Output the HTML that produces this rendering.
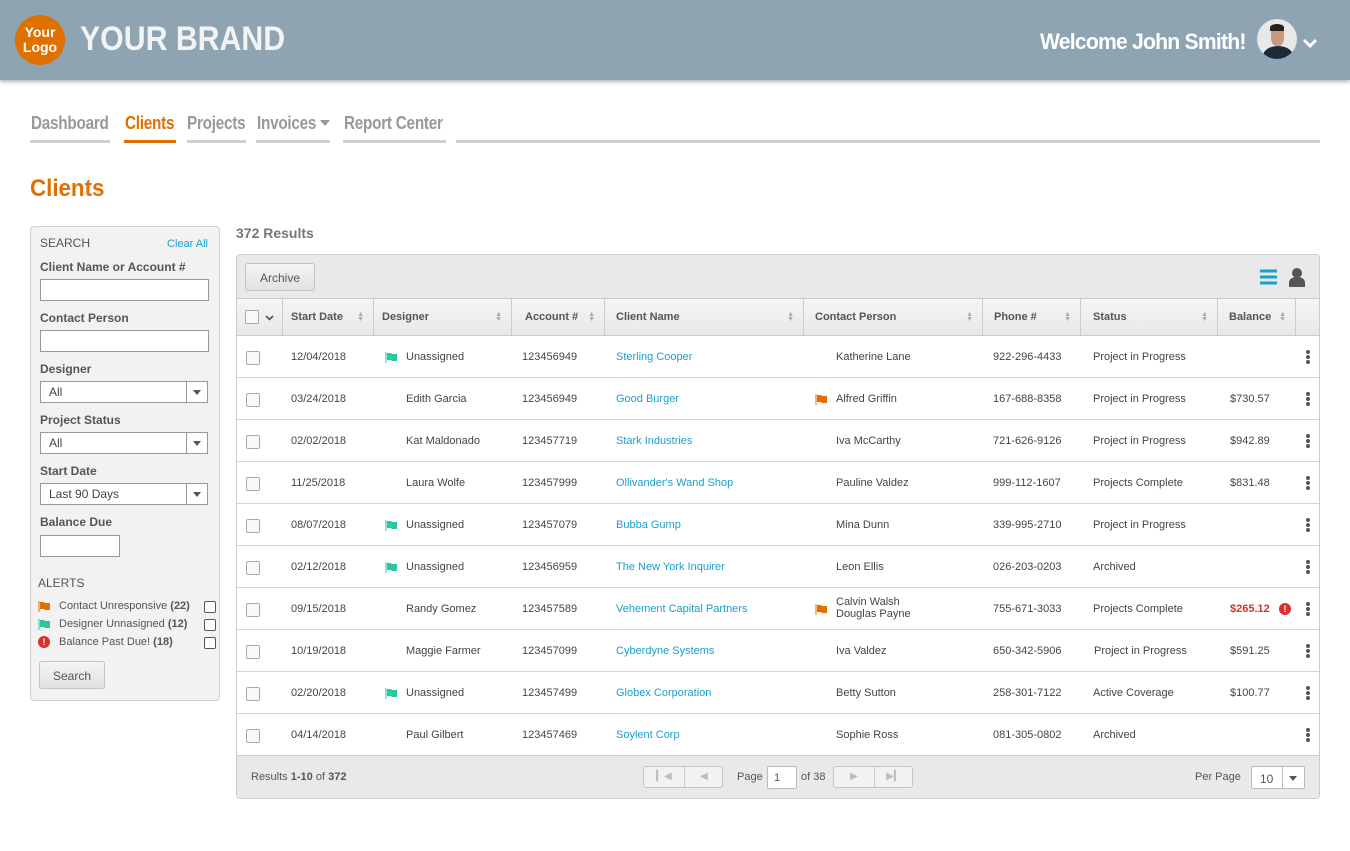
<!DOCTYPE html>
<html><head><meta charset="utf-8"><style>
*{box-sizing:border-box;margin:0;padding:0}
body{width:1350px;height:851px;background:#fff;font-family:"Liberation Sans",sans-serif;position:relative;overflow:hidden;color:#444}
.a{position:absolute}
.hdr{left:0;top:0;width:1350px;height:80px;background:#8fa4b2;box-shadow:0 2px 4px rgba(0,0,0,.3)}
.logo{left:15px;top:15px;width:50px;height:50px;border-radius:50%;background:#e07000;color:#fff;font-weight:bold;font-size:14px;line-height:15px;text-align:center;padding-top:10px}
.nav{top:113px;font-size:18px;color:#999;font-weight:bold;letter-spacing:-0.3px;transform:scaleX(0.85);transform-origin:0 0;white-space:nowrap}
.ul{top:140px;height:3px;background:#d0d0d0}
.side{left:30px;top:226px;width:190px;height:475px;background:#f2f2f2;border:1px solid #d0d0d0;border-radius:4px}
.lbl{font-size:12px;font-weight:bold;color:#555;left:9px}
.inp{left:9px;width:169px;height:22px;background:#fff;border:1px solid #999}
.sel{left:9px;width:168px;height:22px;background:#fff;border:1px solid #999;font-size:12px;padding:3px 0 0 8px;color:#444}
.sel:after{content:"";position:absolute;right:0;top:0;width:20px;height:20px;border-left:1px solid #999}
.sel i{position:absolute;right:6px;top:8px;border:4px solid transparent;border-top:5px solid #555}
.panel{left:236px;top:254px;width:1084px;height:545px;border:1px solid #ccc;border-radius:4px;background:#fff;overflow:hidden}
.tb{left:0;top:0;width:1084px;height:44px;background:#e9e9e9;border-bottom:1px solid #ccc}
.btn{background:linear-gradient(#f4f4f4,#e2e2e2);border:1px solid #c4c4c4;border-radius:3px;font-size:12px;color:#555;text-align:center}
.th{top:44px;height:37px;width:1084px;background:linear-gradient(#f5f5f5,#e8e8e8);border-bottom:1px solid #ccc}
.th div{position:absolute;top:0;height:36px;border-right:1px solid #ccc;font-size:11px;font-weight:bold;color:#555;padding:12px 0 0 8px}
.th s{position:absolute;right:9px;top:13px;font-size:7px;line-height:5px;color:#aaa;text-decoration:none}
.row{left:0;width:1084px;height:42px;border-bottom:1px solid #d5d5d5;font-size:11px;color:#444}
.row span{position:absolute;top:15px;white-space:nowrap}
.cb{position:absolute;left:9px;top:15px;width:14px;height:14px;border:1px solid #aaa;border-radius:2px;background:#f8f8f8}
.lk{color:#1a9fc9}
.dots{position:absolute;left:1069px;top:14px;width:4px}
.dots b{display:block;width:4px;height:4px;border-radius:50%;background:#555;margin-bottom:1px}
.flag{position:absolute;top:16px;width:14px;height:11px}
.ft{left:0;top:500px;width:1084px;height:45px;background:#e9e9e9;border-top:1px solid #ccc;font-size:11px;color:#555}
.sm{display:inline-block;width:12px;height:12px;border:1px solid #555;border-radius:2px;background:#fff}
</style></head><body>
<div class="a hdr"></div>
<div class="a logo">Your<br>Logo</div>
<div class="a" style="left:80px;top:20px;font-size:34px;font-weight:bold;color:#f3f3f3;transform:scaleX(0.89);transform-origin:0 0;white-space:nowrap">YOUR BRAND</div>
<div class="a" style="left:1040px;top:29px;font-size:22px;font-weight:bold;color:#fff;letter-spacing:-0.8px;transform:scaleX(0.96);transform-origin:0 0;white-space:nowrap">Welcome John Smith!</div>
<div class="a" style="left:1257px;top:19px;width:40px;height:40px;border-radius:50%;background:#e8e8e8;overflow:hidden"><div class="a" style="left:6px;top:27px;width:30px;height:20px;border-radius:50% 50% 0 0;background:#1d2a38"></div><div class="a" style="left:14px;top:7px;width:13px;height:20px;border-radius:40%;background:#c99880"></div><div class="a" style="left:13px;top:5px;width:14px;height:7px;border-radius:50% 50% 0 0;background:#2a1f1a"></div></div>
<svg class="a" style="left:1302px;top:38px" width="16" height="12"><path d="M2 2l6 6 6-6" stroke="#fff" stroke-width="3" fill="none"/></svg>

<div class="a nav" style="left:31px">Dashboard</div><div class="a ul" style="left:30px;width:80px"></div>
<div class="a nav" style="left:125px;color:#e07000">Clients</div><div class="a ul" style="left:124px;width:52px;background:#e07000"></div>
<div class="a nav" style="left:187px">Projects</div><div class="a ul" style="left:187px;width:59px"></div>
<div class="a nav" style="left:257px">Invoices</div><div class="a" style="left:320px;top:120px;border:5px solid transparent;border-top:6px solid #999"></div><div class="a ul" style="left:256px;width:74px"></div>
<div class="a nav" style="left:344px">Report Center</div><div class="a ul" style="left:343px;width:103px"></div>
<div class="a ul" style="left:456px;width:864px"></div>

<div class="a" style="left:30px;top:175px;font-size:24px;font-weight:bold;color:#e07000;transform:scaleX(0.93);transform-origin:0 0">Clients</div>

<div class="a side">
<div class="a" style="left:9px;top:9px;font-size:12px;color:#555">SEARCH</div>
<div class="a" style="left:136px;top:11px;font-size:11px;color:#1a9fc9">Clear All</div>
<div class="a lbl" style="top:33px">Client Name or Account #</div>
<div class="a inp" style="top:52px"></div>
<div class="a lbl" style="top:84px">Contact Person</div>
<div class="a inp" style="top:103px"></div>
<div class="a lbl" style="top:135px">Designer</div>
<div class="a sel" style="top:154px">All<i></i></div>
<div class="a lbl" style="top:186px">Project Status</div>
<div class="a sel" style="top:205px">All<i></i></div>
<div class="a lbl" style="top:237px">Start Date</div>
<div class="a sel" style="top:256px">Last 90 Days<i></i></div>
<div class="a lbl" style="top:288px">Balance Due</div>
<div class="a inp" style="top:308px;width:80px"></div>
<div class="a" style="left:7px;top:349px;font-size:12px;color:#555">ALERTS</div>
<svg class="a" style="left:7px;top:374px" width="14" height="11"><path d="M1 0v11" stroke="#e07000"/><path d="M2 1h4l1 1h5v7h-5l-1-1h-4z" fill="#e07000"/></svg>
<div class="a" style="left:28px;top:373px;font-size:11px;color:#555">Contact Unresponsive <b>(22)</b></div><div class="a sm" style="left:173px;top:374px"></div>
<svg class="a" style="left:7px;top:392px" width="14" height="11"><path d="M1 0v11" stroke="#2dc6a0"/><path d="M2 1h4l1 1h5v7h-5l-1-1h-4z" fill="#2dc6a0"/></svg>
<div class="a" style="left:28px;top:391px;font-size:11px;color:#555">Designer Unnasigned <b>(12)</b></div><div class="a sm" style="left:173px;top:392px"></div>
<div class="a" style="left:7px;top:409px;width:12px;height:12px;border-radius:50%;background:#d9302c;color:#fff;font-size:9px;font-weight:bold;text-align:center;line-height:12px">!</div>
<div class="a" style="left:28px;top:409px;font-size:11px;color:#555">Balance Past Due! <b>(18)</b></div><div class="a sm" style="left:173px;top:410px"></div>
<div class="a btn" style="left:8px;top:434px;width:66px;height:28px;padding-top:7px">Search</div>
</div>

<div class="a" style="left:236px;top:225px;font-size:14px;font-weight:bold;color:#777">372 Results</div>

<div class="a panel">
<div class="a tb"></div>
<div class="a btn" style="left:8px;top:8px;width:70px;height:28px;padding-top:7px">Archive</div>
<svg class="a" style="left:1022px;top:13px" width="20" height="18"><path d="M1 3h17M1 9h17M1 15h17" stroke="#1a9fc9" stroke-width="3"/></svg>
<svg class="a" style="left:1051px;top:12px" width="18" height="20"><circle cx="9" cy="6" r="5" fill="#555"/><path d="M1 20v-4c0-4 3-6 8-6s8 2 8 6v4z" fill="#555"/></svg>
<div class="a th">
<div style="left:0;width:46px"><span class="cb" style="top:11px;left:8px"></span><svg style="position:absolute;left:28px;top:16px" width="9" height="6"><path d="M1 1l3.5 3.5L8 1" stroke="#555" stroke-width="1.6" fill="none"/></svg></div>
<div style="left:46px;width:91px">Start Date<s>▲<br>▼</s></div>
<div style="left:137px;width:138px">Designer<s>▲<br>▼</s></div>
<div style="left:275px;width:93px;padding-left:13px">Account #<s>▲<br>▼</s></div>
<div style="left:368px;width:199px;padding-left:11px">Client Name<s>▲<br>▼</s></div>
<div style="left:567px;width:179px;padding-left:11px">Contact Person<s>▲<br>▼</s></div>
<div style="left:746px;width:98px;padding-left:11px">Phone #<s>▲<br>▼</s></div>
<div style="left:844px;width:137px;padding-left:12px">Status<s>▲<br>▼</s></div>
<div style="left:981px;width:78px;padding-left:11px">Balance<s>▲<br>▼</s></div>
<div style="left:1059px;width:25px;border-right:none"></div>
</div>

<div class="a row" style="top:81px"><i class="cb"></i><span style="left:54px">12/04/2018</span><svg class="flag" style="left:148px"><path d="M1 0v11" stroke="#2dc6a0"/><path d="M2 1h4l1 1h5v7h-5l-1-1h-4z" fill="#2dc6a0"/></svg><span style="left:169px">Unassigned</span><span style="left:285px">123456949</span><span class="lk" style="left:379px">Sterling Cooper</span><span style="left:599px">Katherine Lane</span><span style="left:756px">922-296-4433</span><span style="left:856px">Project in Progress</span><i class="dots"><b></b><b></b><b></b></i></div>
<div class="a row" style="top:123px"><i class="cb"></i><span style="left:54px">03/24/2018</span><span style="left:169px">Edith Garcia</span><span style="left:285px">123456949</span><span class="lk" style="left:379px">Good Burger</span><svg class="flag" style="left:578px"><path d="M1 0v11" stroke="#e07000"/><path d="M2 1h4l1 1h5v7h-5l-1-1h-4z" fill="#e07000"/></svg><span style="left:599px">Alfred Griffin</span><span style="left:756px">167-688-8358</span><span style="left:856px">Project in Progress</span><span style="left:993px">$730.57</span><i class="dots"><b></b><b></b><b></b></i></div>
<div class="a row" style="top:165px"><i class="cb"></i><span style="left:54px">02/02/2018</span><span style="left:169px">Kat Maldonado</span><span style="left:285px">123457719</span><span class="lk" style="left:379px">Stark Industries</span><span style="left:599px">Iva McCarthy</span><span style="left:756px">721-626-9126</span><span style="left:856px">Project in Progress</span><span style="left:993px">$942.89</span><i class="dots"><b></b><b></b><b></b></i></div>
<div class="a row" style="top:207px"><i class="cb"></i><span style="left:54px">11/25/2018</span><span style="left:169px">Laura Wolfe</span><span style="left:285px">123457999</span><span class="lk" style="left:379px">Ollivander's Wand Shop</span><span style="left:599px">Pauline Valdez</span><span style="left:756px">999-112-1607</span><span style="left:856px">Projects Complete</span><span style="left:993px">$831.48</span><i class="dots"><b></b><b></b><b></b></i></div>
<div class="a row" style="top:249px"><i class="cb"></i><span style="left:54px">08/07/2018</span><svg class="flag" style="left:148px"><path d="M1 0v11" stroke="#2dc6a0"/><path d="M2 1h4l1 1h5v7h-5l-1-1h-4z" fill="#2dc6a0"/></svg><span style="left:169px">Unassigned</span><span style="left:285px">123457079</span><span class="lk" style="left:379px">Bubba Gump</span><span style="left:599px">Mina Dunn</span><span style="left:756px">339-995-2710</span><span style="left:856px">Project in Progress</span><i class="dots"><b></b><b></b><b></b></i></div>
<div class="a row" style="top:291px"><i class="cb"></i><span style="left:54px">02/12/2018</span><svg class="flag" style="left:148px"><path d="M1 0v11" stroke="#2dc6a0"/><path d="M2 1h4l1 1h5v7h-5l-1-1h-4z" fill="#2dc6a0"/></svg><span style="left:169px">Unassigned</span><span style="left:285px">123456959</span><span class="lk" style="left:379px">The New York Inquirer</span><span style="left:599px">Leon Ellis</span><span style="left:756px">026-203-0203</span><span style="left:856px">Archived</span><i class="dots"><b></b><b></b><b></b></i></div>
<div class="a row" style="top:333px"><i class="cb"></i><span style="left:54px">09/15/2018</span><span style="left:169px">Randy Gomez</span><span style="left:285px">123457589</span><span class="lk" style="left:379px">Vehement Capital Partners</span><svg class="flag" style="left:578px"><path d="M1 0v11" stroke="#e07000"/><path d="M2 1h4l1 1h5v7h-5l-1-1h-4z" fill="#e07000"/></svg><span style="left:599px;top:8px;line-height:12px">Calvin Walsh<br>Douglas Payne</span><span style="left:756px">755-671-3033</span><span style="left:856px">Projects Complete</span><span style="left:993px;color:#d9302c;font-weight:bold">$265.12</span><i class="a" style="left:1042px;top:15px;width:12px;height:12px;border-radius:50%;background:#d9302c;color:#fff;font-size:9px;font-weight:bold;text-align:center;line-height:12px;font-style:normal">!</i><i class="dots"><b></b><b></b><b></b></i></div>
<div class="a row" style="top:375px"><i class="cb"></i><span style="left:54px">10/19/2018</span><span style="left:169px">Maggie Farmer</span><span style="left:285px">123457099</span><span class="lk" style="left:379px">Cyberdyne Systems</span><span style="left:599px">Iva Valdez</span><span style="left:756px">650-342-5906</span><span style="left:857px">Project in Progress</span><span style="left:993px">$591.25</span><i class="dots"><b></b><b></b><b></b></i></div>
<div class="a row" style="top:417px"><i class="cb"></i><span style="left:54px">02/20/2018</span><svg class="flag" style="left:148px"><path d="M1 0v11" stroke="#2dc6a0"/><path d="M2 1h4l1 1h5v7h-5l-1-1h-4z" fill="#2dc6a0"/></svg><span style="left:169px">Unassigned</span><span style="left:285px">123457499</span><span class="lk" style="left:379px">Globex Corporation</span><span style="left:599px">Betty Sutton</span><span style="left:756px">258-301-7122</span><span style="left:856px">Active Coverage</span><span style="left:993px">$100.77</span><i class="dots"><b></b><b></b><b></b></i></div>
<div class="a row" style="top:459px;border-bottom:none"><i class="cb"></i><span style="left:54px">04/14/2018</span><span style="left:169px">Paul Gilbert</span><span style="left:285px">123457469</span><span class="lk" style="left:379px">Soylent Corp</span><span style="left:599px">Sophie Ross</span><span style="left:756px">081-305-0802</span><span style="left:856px">Archived</span><i class="dots"><b></b><b></b><b></b></i></div>

<div class="a ft">
<div class="a" style="left:14px;top:15px">Results <b>1-10</b> of <b>372</b></div>
<div class="a btn" style="left:406px;top:10px;width:80px;height:22px;background:#f2f2f2;color:#bbb;font-size:10px"><span style="position:absolute;left:0;width:40px;top:4px">▎◀</span><span style="position:absolute;left:40px;width:39px;border-left:1px solid #ccc;height:20px;top:0;padding-top:4px">◀</span></div>
<div class="a" style="left:500px;top:15px">Page</div>
<div class="a" style="left:530px;top:10px;width:30px;height:23px;background:#fff;border:1px solid #bbb;border-radius:2px;padding:5px 0 0 6px">1</div>
<div class="a" style="left:564px;top:15px">of 38</div>
<div class="a btn" style="left:596px;top:10px;width:80px;height:22px;background:#f2f2f2;color:#bbb;font-size:10px"><span style="position:absolute;left:0;width:40px;top:4px">▶</span><span style="position:absolute;left:40px;width:39px;border-left:1px solid #ccc;height:20px;top:0;padding-top:4px">▶▎</span></div>
<div class="a" style="left:958px;top:15px">Per Page</div>
<div class="a" style="left:1014px;top:10px;width:54px;height:23px;background:#fff;border:1px solid #bbb;border-radius:2px;padding:5px 0 0 8px;font-size:12px">10<i style="position:absolute;right:0;top:0;width:22px;height:21px;border-left:1px solid #bbb"></i><i style="position:absolute;right:7px;top:9px;border:4px solid transparent;border-top:5px solid #555"></i></div>
</div>
</div>
</body></html>
